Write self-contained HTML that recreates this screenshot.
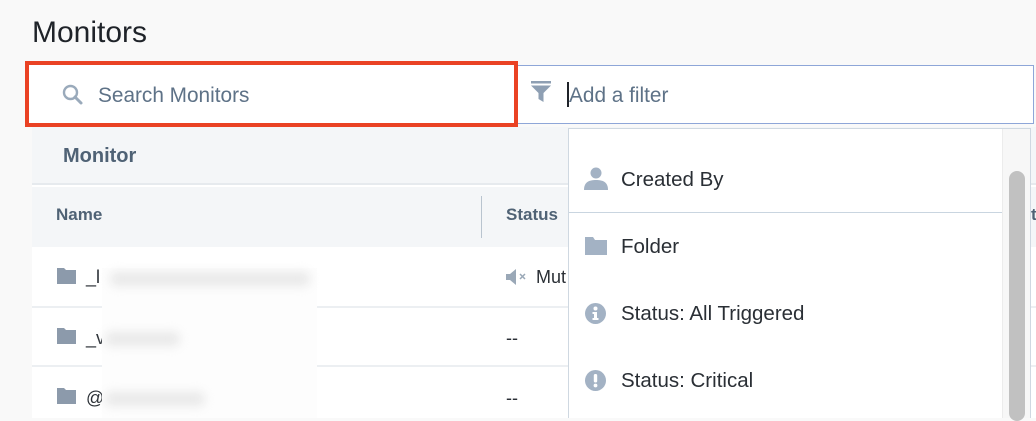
<!DOCTYPE html>
<html><head><style>
*{box-sizing:border-box;margin:0;padding:0}
body{width:1036px;height:418px;overflow:hidden;background:#f9f9f9;font-family:"Liberation Sans",sans-serif;position:relative}
.a{position:absolute}
.t{font-size:20.5px;color:#2a2f35}
</style></head><body>
<div class="a" style="left:32px;top:16px;font-size:30px;color:#1f2329">Monitors</div>

<!-- search box -->
<div class="a" style="left:25px;top:61px;width:493px;height:66px;border:4px solid #ea4224;background:#fff"></div>
<svg class="a" style="left:62px;top:84px" width="22" height="22" viewBox="0 0 22 22"><circle cx="8.5" cy="8.5" r="6.5" fill="none" stroke="#9aaabb" stroke-width="2.4"/><line x1="13" y1="13" x2="19" y2="19" stroke="#9aaabb" stroke-width="3" stroke-linecap="round"/></svg>
<div class="a" style="left:98px;top:84px;font-size:20.8px;color:#5e7287">Search Monitors</div>

<!-- filter box -->
<div class="a" style="left:518px;top:65px;width:516px;height:59px;border:1px solid #8ea6d8;border-left:none;background:#fff"></div>
<svg class="a" style="left:530px;top:81px" width="22" height="24" viewBox="0 0 22 24"><rect x="1" y="0" width="20" height="2.5" fill="#8e9fb3"/><path d="M1 4.5H21L13.5 12V21L8.5 18V12Z" fill="#8e9fb3"/></svg>
<div class="a" style="left:567px;top:82px;width:2px;height:25px;background:#1f2329"></div>
<div class="a" style="left:569px;top:84px;font-size:20.8px;color:#5e7287">Add a filter</div>

<!-- table -->
<div class="a" style="left:32px;top:127px;width:1004px;height:291px;background:#fff"></div>
<div class="a" style="left:32px;top:127px;width:1004px;height:58px;background:#f4f6f8;border-bottom:2px solid #e6eaee"></div>
<div class="a" style="left:63px;top:145px;font-size:20px;color:#4f6275;font-weight:bold">Monitor</div>
<div class="a" style="left:32px;top:187px;width:1004px;height:60px;background:#f4f6f8"></div>
<div class="a" style="left:56px;top:205px;font-size:17px;color:#4f6275;font-weight:bold">Name</div>
<div class="a" style="left:481px;top:196px;width:1px;height:42px;background:#b9c4cf"></div>
<div class="a" style="left:506px;top:205px;font-size:17px;color:#4f6275;font-weight:bold">Status</div>
<div class="a" style="left:32px;top:306px;width:1004px;height:2px;background:#eceff2"></div>
<div class="a" style="left:32px;top:365px;width:1004px;height:2px;background:#eceff2"></div>

<!-- folders -->
<svg class="a" style="left:57px;top:268px" width="19" height="16"><path d="M0 0H7L9 2H19V16H0Z" fill="#8c9aab"/></svg>
<svg class="a" style="left:57px;top:328px" width="19" height="16"><path d="M0 0H7L9 2H19V16H0Z" fill="#8c9aab"/></svg>
<svg class="a" style="left:57px;top:388px" width="19" height="16"><path d="M0 0H7L9 2H19V16H0Z" fill="#8c9aab"/></svg>
<div class="a t" style="left:86px;top:267px;font-size:18px">_l</div>
<div class="a t" style="left:86px;top:328px;font-size:18px">_v</div>
<div class="a t" style="left:86px;top:388px;font-size:18px">@</div>
<div class="a" style="left:102px;top:268px;width:215px;height:150px;background:#fdfdfd"></div>
<div class="a" style="left:110px;top:272px;width:200px;height:14px;background:#e8e8e8;border-radius:7px;filter:blur(5px)"></div>
<div class="a" style="left:105px;top:332px;width:75px;height:14px;background:#e8e8e8;border-radius:7px;filter:blur(5px)"></div>
<div class="a" style="left:105px;top:392px;width:100px;height:14px;background:#e8e8e8;border-radius:7px;filter:blur(5px)"></div>

<svg class="a" style="left:506px;top:268px" width="22" height="18"><path d="M0 6H4L10 1V17L4 12H0Z" fill="#9aa8b7"/><path d="M14 6L19 11M19 6L14 11" stroke="#9aa8b7" stroke-width="1.5"/></svg>
<div class="a t" style="left:536px;top:267px;font-size:18px">Mut</div>
<div class="a t" style="left:506px;top:328px;font-size:18px">--</div>
<div class="a t" style="left:506px;top:388px;font-size:18px">--</div>

<!-- dropdown -->
<div class="a" style="left:568px;top:128px;width:463px;height:290px;background:#fff;border:1px solid #cfd8e1;border-bottom:none"></div>
<div class="a" style="left:569px;top:212px;width:433px;height:1px;background:#c9d5e0"></div>
<div class="a" style="left:1002px;top:129px;width:28px;height:289px;background:#f7f7f7;border-left:1px solid #ececec"></div>
<div class="a" style="left:1009px;top:171px;width:16px;height:250px;background:#c1c1c1;border-radius:8px"></div>

<svg class="a" style="left:584px;top:167px" width="24" height="24"><circle cx="12" cy="6" r="5.5" fill="#a3b2c4"/><path d="M0 23C0 15 5 13 12 13S24 15 24 23Z" fill="#a3b2c4"/></svg>
<div class="a t" style="left:621px;top:168px">Created By</div>
<svg class="a" style="left:585px;top:237px" width="22" height="18"><path d="M0 0H8L10 3H22V18H0Z" fill="#a3b2c4"/></svg>
<div class="a t" style="left:621px;top:235px">Folder</div>
<svg class="a" style="left:585px;top:303px" width="21" height="21"><circle cx="10.5" cy="10.5" r="10.5" fill="#a3b2c4"/><circle cx="10.5" cy="5.5" r="2" fill="#fff"/><path d="M7.5 9H12V15H13.5V17H7.5V15H9V11H7.5Z" fill="#fff"/></svg>
<div class="a t" style="left:621px;top:302px">Status: All Triggered</div>
<svg class="a" style="left:585px;top:370px" width="21" height="21"><circle cx="10.5" cy="10.5" r="10.5" fill="#a3b2c4"/><rect x="8.8" y="4" width="3.4" height="8.5" rx="1.5" fill="#fff"/><circle cx="10.5" cy="15.5" r="1.9" fill="#fff"/></svg>
<div class="a t" style="left:621px;top:369px">Status: Critical</div>

<div class="a" style="left:1031px;top:205px;font-size:17px;color:#4f6275;font-weight:bold">t</div>
</body></html>
